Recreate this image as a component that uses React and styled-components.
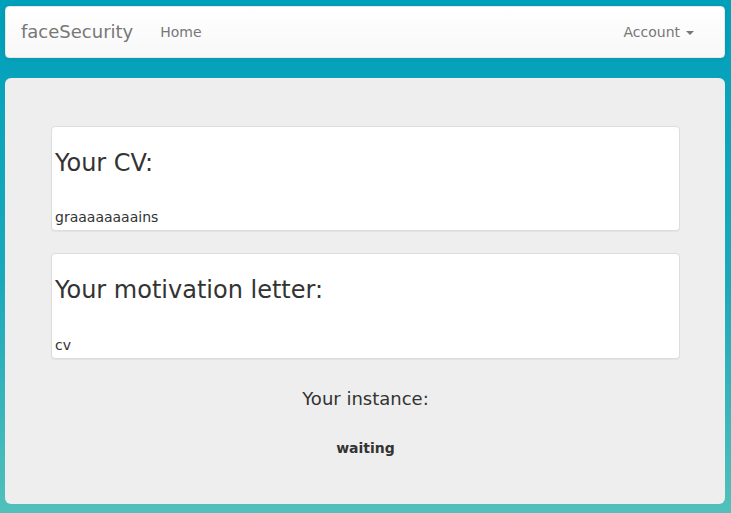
import React from 'react';
import styled, { createGlobalStyle } from 'styled-components';

const GlobalStyle = createGlobalStyle`
	html, body {
		margin: 0;
		min-height: 100%;
	}
	body {
		background: linear-gradient(to bottom, #00a0bb 0%, #1aa9bb 55%, #52c0bb 100%);
		background-attachment: fixed;
		min-height: 513px;
		font-family: "DejaVu Sans", Verdana, sans-serif;
		font-size: 14px;
		line-height: 20px;
		color: #333;
	}
`;

export default function App() {
	return (
		<>
			<GlobalStyle/>
			<StyledPage>
				<StyledNavbar>
					<StyledBrand>faceSecurity</StyledBrand>
					<StyledNavLink>Home</StyledNavLink>
					<StyledAccount>
						Account
						<StyledCaret/>
					</StyledAccount>
				</StyledNavbar>
				<StyledJumbotron>
					<InfoCard title="Your CV:" text="graaaaaaaains"/>
					<InfoCard title="Your motivation letter:" text="cv"/>
					<StyledInstanceTitle>Your instance:</StyledInstanceTitle>
					<StyledStatus>waiting</StyledStatus>
				</StyledJumbotron>
			</StyledPage>
		</>
	);
}

function InfoCard({ title, text }) {
	return (
		<StyledCard>
			<StyledCardTitle>{title}</StyledCardTitle>
			<StyledCardText>{text}</StyledCardText>
		</StyledCard>
	);
}

const StyledPage = styled.div`
	padding: 6px 6px 8px 5px;
`;

const StyledNavbar = styled.nav`
	display: flex;
	align-items: flex-start;
	height: 50px;
	padding: 0 15px;
	border: 1px solid #e7e7e7;
	border-radius: 4px;
	background: linear-gradient(to bottom, #fff 0%, #f8f8f8 100%);
	box-shadow: inset 0 1px 0 rgba(255, 255, 255, 0.15), 0 1px 5px rgba(0, 0, 0, 0.075);
	margin-bottom: 20px;
`;

const StyledBrand = styled.a`
	display: block;
	padding: 15px 12px 15px 0;
	font-size: 18px;
	line-height: 20px;
	color: #777;
	text-shadow: 0 1px 0 rgba(255, 255, 255, 0.25);
`;

const StyledNavLink = styled.a`
	display: block;
	padding: 15px;
	color: #777;
	text-shadow: 0 1px 0 rgba(255, 255, 255, 0.25);
`;

const StyledAccount = styled(StyledNavLink)`
	margin-left: auto;
	display: flex;
	align-items: center;
	padding-right: 15px;
`;

const StyledCaret = styled.span`
	display: inline-block;
	width: 0;
	height: 0;
	margin-left: 6px;
	margin-top: 1px;
	border-top: 4px solid #777;
	border-left: 4px solid transparent;
	border-right: 4px solid transparent;
`;

const StyledJumbotron = styled.main`
	display: flex;
	flex-direction: column;
	padding: 48px 45px 46px 46px;
	border-radius: 6px;
	background: #eee;
`;

const StyledCard = styled.section`
	padding: 0 3px 3px;
	margin-bottom: 22px;
	border: 1px solid #ddd;
	border-radius: 4px;
	background: #fff;
	box-shadow: 0 1px 1px rgba(0, 0, 0, 0.05);

	& + & {
		margin-bottom: 20px;
	}
`;

const StyledCardTitle = styled.h3`
	margin: 23px 0 31px;
	font-size: 24px;
	font-weight: 500;
	line-height: 1.1;
`;

const StyledCardText = styled.div`
	font-size: 14px;
	line-height: 20px;
`;

const StyledInstanceTitle = styled.h4`
	margin: 10px 0 29px;
	text-align: center;
	font-size: 18px;
	font-weight: 500;
	line-height: 1.1;
`;

const StyledStatus = styled.div`
	text-align: center;
	font-weight: bold;
`;
